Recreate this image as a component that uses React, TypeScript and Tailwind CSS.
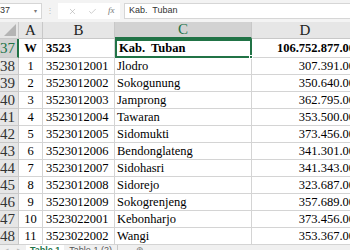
import { X, Check } from 'lucide-react';

const rows = [
  { n: 38, a: '1', b: '3523012001', c: 'Jlodro', d: '307.391.00' },
  { n: 39, a: '2', b: '3523012002', c: 'Sokogunung', d: '350.640.00' },
  { n: 40, a: '3', b: '3523012003', c: 'Jamprong', d: '362.795.00' },
  { n: 41, a: '4', b: '3523012004', c: 'Tawaran', d: '353.500.00' },
  { n: 42, a: '5', b: '3523012005', c: 'Sidomukti', d: '373.456.00' },
  { n: 43, a: '6', b: '3523012006', c: 'Bendonglateng', d: '341.301.00' },
  { n: 44, a: '7', b: '3523012007', c: 'Sidohasri', d: '341.343.00' },
  { n: 45, a: '8', b: '3523012008', c: 'Sidorejo', d: '323.687.00' },
  { n: 46, a: '9', b: '3523012009', c: 'Sokogrenjeng', d: '357.689.00' },
  { n: 47, a: '10', b: '3523022001', c: 'Kebonharjo', d: '373.456.00' },
  { n: 48, a: '11', b: '3523022002', c: 'Wangi', d: '353.367.00' },
];

const cols = 'grid grid-cols-[19px_24px_72px_137px_106px]';
const serif = "font-['Liberation_Serif',serif]";

const App = () => {
  return (
    <div className={`w-[350px] h-[250px] overflow-hidden bg-white flex flex-col ${serif}`}>
      {/* formula bar */}
      <div className="h-[22px] shrink-0 bg-[#f3f3f3] flex items-center gap-1 font-['Liberation_Sans',sans-serif] text-[9px] text-[#333]">
        <div className="w-[42px] h-[16px] bg-white border border-[#d6d6d6] border-l-0 flex items-center justify-between pr-1">
          <span>37</span>
          <span className="text-[6px] text-[#777]">▾</span>
        </div>
        <div className="w-[8px] flex justify-center text-[#bbb] text-[8px] leading-none">⋮</div>
        <div className="w-[62px] h-[16px] bg-white flex items-center justify-around pl-1 text-[#aaa]">
          <X size={9} strokeWidth={1.5} />
          <Check size={9} strokeWidth={1.5} />
          <span className="italic font-['Liberation_Serif',serif] text-[9px] text-[#777]">fx</span>
        </div>
        <div className="flex-1 h-[16px] bg-white border border-[#d6d6d6] border-r-0 flex items-center pl-1 whitespace-pre">
          Kab.  Tuban
        </div>
      </div>

      {/* column headers */}
      <div className={`${cols} h-[17px] shrink-0 bg-[#e6e6e6] text-[15px] text-[#222] leading-none`}>
        <div className="relative border-r border-b border-[#c8c8c8]">
          <div className="absolute right-[2px] bottom-[2px] w-0 h-0 border-l-[12px] border-l-transparent border-b-[12px] border-b-[#b4b4b4]" />
        </div>
        <div className="flex items-center justify-center border-r border-b border-[#c8c8c8]">A</div>
        <div className="flex items-center justify-center border-r border-b border-[#c8c8c8]">B</div>
        <div className="flex items-center justify-center bg-[#d2d2d2] border-r border-[#c8c8c8] border-b-2 border-b-[#217346] text-[#217346]">C</div>
        <div className="flex items-center justify-center border-b border-[#c8c8c8]">D</div>
      </div>

      {/* row 37 */}
      <div className={`${cols} h-[19px] shrink-0 text-[12.5px] font-bold text-black leading-none`}>
        <div className="flex items-center bg-[#d2d2d2] border-r-2 border-r-[#217346] border-b border-[#c8c8c8] text-[15px] font-normal text-[#217346]">37</div>
        <div className="flex items-center justify-center border-r border-b border-[#d4d4d4]">W</div>
        <div className="flex items-center pl-[3px] border-r border-b border-[#d4d4d4]">3523</div>
        <div className="relative flex items-center pl-[2px] border-2 border-[#217346] whitespace-pre">
          Kab.  Tuban
          <div className="absolute -right-[3px] -bottom-[3px] w-[4px] h-[4px] bg-[#217346] border border-white" />
        </div>
        <div className="flex items-center justify-end pr-[3px] border-b border-[#d4d4d4] whitespace-nowrap">106.752.877.00</div>
      </div>

      {rows.map(r => (
        <div key={r.n} className={`${cols} h-[17px] shrink-0 text-[12.5px] text-black leading-none`}>
          <div className="flex items-center bg-[#e6e6e6] border-r border-b border-[#c8c8c8] text-[15px] text-[#333]">{r.n}</div>
          <div className="flex items-center justify-center border-r border-b border-[#d4d4d4]">{r.a}</div>
          <div className="flex items-center pl-[3px] border-r border-b border-[#d4d4d4]">{r.b}</div>
          <div className="flex items-center pl-[2px] border-r border-b border-[#d4d4d4]">{r.c}</div>
          <div className="flex items-center justify-end pr-[3px] border-b border-[#d4d4d4] whitespace-nowrap">{r.d}</div>
        </div>
      ))}

      {/* sheet tabs */}
      <div className="h-[20px] shrink-0 bg-[#f0f0f0] flex items-start font-['Liberation_Sans',sans-serif] text-[9px] leading-none text-[#555]">
        <div className="w-[26px] flex gap-2 pl-1 pt-[1px] text-[#bbb]">
          <span>◂</span>
          <span>▸</span>
        </div>
        <div className="px-[4px] pt-[1px] bg-white text-[#217346] font-bold">Table 1</div>
        <div className="px-[5px] pt-[1px] border-r border-[#c8c8c8]">Table 1 (2)</div>
        <div className="pl-[18px] pt-[1px] text-[#777]">⊕</div>
      </div>
    </div>
  );
};

export default App;
